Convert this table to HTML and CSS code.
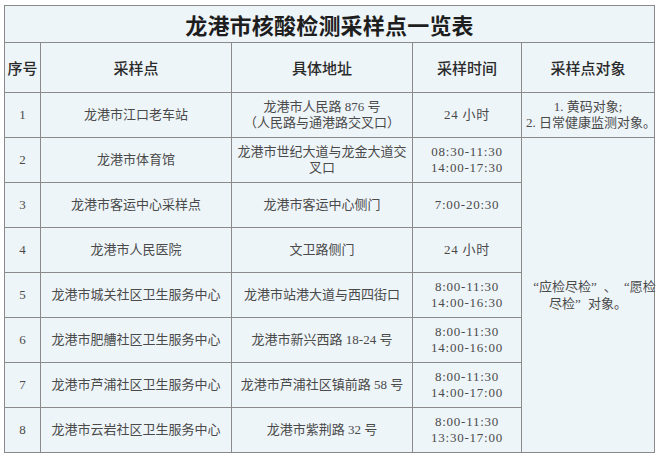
FILE: index.html
```html
<!DOCTYPE html>
<html lang="zh-CN">
<head>
<meta charset="utf-8">
<title>龙港市核酸检测采样点一览表</title>
<link rel="stylesheet" href="styles.css">
</head>
<body>
<table class="sheet">
  <colgroup>
    <col class="c-no">
    <col class="c-site">
    <col class="c-addr">
    <col class="c-time">
    <col class="c-target">
  </colgroup>
  <thead>
    <tr class="title-row"><th colspan="5">龙港市核酸检测采样点一览表</th></tr>
    <tr class="head-row">
      <th>序号</th>
      <th>采样点</th>
      <th>具体地址</th>
      <th>采样时间</th>
      <th>采样点对象</th>
    </tr>
  </thead>
  <tbody>
    <tr>
      <td>1</td>
      <td>龙港市江口老车站</td>
      <td>龙港市人民路 876 号<br>（人民路与通港路交叉口）</td>
      <td class="time">24 小时</td>
      <td>1. 黄码对象;<br><span class="nowrap">2. 日常健康监测对象。</span></td>
    </tr>
    <tr>
      <td>2</td>
      <td>龙港市体育馆</td>
      <td>龙港市世纪大道与龙金大道交叉口</td>
      <td class="time">08:30-11:30<br>14:00-17:30</td>
      <td rowspan="7" class="merged"><span class="line"><span class="qo">“</span>应检尽检<span class="qc">”</span>、<span class="qo">“</span>愿检</span><span class="line">尽检<span class="qc">”</span>对象。</span></td>
    </tr>
    <tr>
      <td>3</td>
      <td>龙港市客运中心采样点</td>
      <td>龙港市客运中心侧门</td>
      <td class="time">7:00-20:30</td>
    </tr>
    <tr>
      <td>4</td>
      <td>龙港市人民医院</td>
      <td>文卫路侧门</td>
      <td class="time">24 小时</td>
    </tr>
    <tr>
      <td>5</td>
      <td>龙港市城关社区卫生服务中心</td>
      <td>龙港市站港大道与西四街口</td>
      <td class="time">8:00-11:30<br>14:00-16:30</td>
    </tr>
    <tr>
      <td>6</td>
      <td>龙港市肥艚社区卫生服务中心</td>
      <td>龙港市新兴西路 18-24 号</td>
      <td class="time">8:00-11:30<br>14:00-16:00</td>
    </tr>
    <tr>
      <td>7</td>
      <td>龙港市芦浦社区卫生服务中心</td>
      <td>龙港市芦浦社区镇前路 58 号</td>
      <td class="time">8:00-11:30<br>14:00-17:00</td>
    </tr>
    <tr>
      <td>8</td>
      <td>龙港市云岩社区卫生服务中心</td>
      <td>龙港市紫荆路 32 号</td>
      <td class="time">8:00-11:30<br>13:30-17:00</td>
    </tr>
  </tbody>
</table>
</body>
</html>
```

FILE: styles.css
```css
html, body {
  margin: 0;
  background: #ffffff;
}
body {
  padding: 5px 0 0 4px;
}
.sheet {
  border-collapse: collapse;
  table-layout: fixed;
  width: 650px;
  background: #eef5f9;
  font-family: "Liberation Serif", "Noto Sans CJK SC", serif;
  font-size: 13px;
  line-height: 16px;
  color: #4a4a4a;
  text-spacing-trim: space-all;
}
.c-no { width: 36px; }
.c-site { width: 191px; }
.c-addr { width: 181px; }
.c-time { width: 109px; }
.c-target { width: 133px; }

.sheet th, .sheet td {
  border: 1px solid #8a8a8a;
  text-align: center;
  vertical-align: middle;
  padding: 0 4px;
}
.title-row th {
  height: 36px;
  font-family: "Noto Sans CJK SC", sans-serif;
  font-size: 22px;
  font-weight: 700;
  color: #1e1e1e;
  letter-spacing: 0.2px;
}
.head-row th {
  height: 49px;
  font-family: "Noto Sans CJK SC", sans-serif;
  font-size: 15px;
  font-weight: 500;
  color: #2a2a2a;
  padding: 0 2px;
}
.sheet tbody td {
  height: 44px;
  font-weight: 400;
}
.sheet tbody td:first-child {
  padding: 0;
}
.sheet tbody td.time {
  letter-spacing: 0.75px;
}
.nowrap {
  white-space: nowrap;
}
.merged {
  padding: 0 2px;
  font-family: "Noto Sans CJK SC", sans-serif;
}
.merged .line {
  display: block;
  white-space: nowrap;
}
.qo, .qc {
  font-family: "Liberation Serif", serif;
}
.qo { padding-left: 0.55em; }
.qc { padding-right: 0.55em; }
```
